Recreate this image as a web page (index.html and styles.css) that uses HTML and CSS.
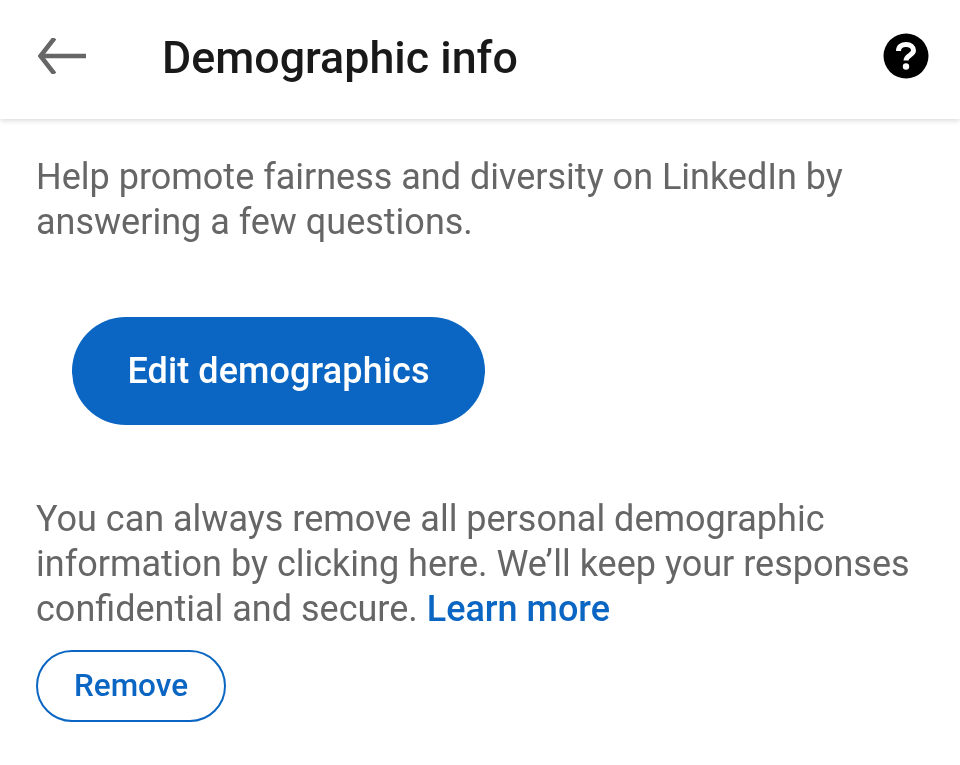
FILE: index.html
```html
<!DOCTYPE html>
<html lang="en">
<head>
  <meta charset="UTF-8">
  <title>Demographic info</title>
  <link rel="stylesheet" href="styles.css">
</head>
<body>

  <header class="topbar">
    <svg class="back-icon" width="48" height="36" viewBox="0 0 48 36" aria-hidden="true">
      <path d="M16.500 0 L2.500 18 L16.500 36 M2.500 18 H48" fill="none" stroke="#666" stroke-width="4.500"/>
    </svg>
    <h1 class="title">Demographic info</h1>
    <svg class="help-icon" width="46" height="46" viewBox="0 0 46 46" aria-hidden="true">
      <circle cx="23" cy="23" r="22.500" fill="#000"/>
      <path d="M15.500 18 C15.500 13.500 19 11.500 23 11.500 C27.500 11.500 30.500 14 30.500 17.500 C30.500 22 23 22.500 23 27.500" fill="none" stroke="#fff" stroke-width="5"/>
      <circle cx="23" cy="33.500" r="3.200" fill="#fff"/>
    </svg>
  </header>

  <main class="content">
    <p class="text">Help promote fairness and diversity on LinkedIn by answering a few questions.</p>
    <a class="button-primary" href="#">Edit demographics</a>
    <p class="text">You can always remove all personal demographic information by clicking here. We’ll keep your responses confidential and secure. <a class="link" href="#">Learn more</a></p>
    <a class="button-outline" href="#">Remove</a>
  </main>

</body>
</html>
```

FILE: styles.css
```css
html, body {
  margin: 0;
  padding: 0;
}

body {
  background-color: #fff;
  font-family: Roboto, "Liberation Sans", sans-serif;
  color: #666;
}

.topbar {
  display: flex;
  align-items: center;
  height: 119px;
  padding: 0 31px 7px 38px;
  box-sizing: border-box;
  background-color: #fff;
  box-shadow: 0 1px 6px rgba(0,0,0,0.18);
}

.back-icon {
  flex: none;
}

.title {
  flex: 1;
  margin: 3px 0 0 76px;
  font-size: 44.800px;
  font-weight: 500;
  color: #191919;
  will-change: transform;
}

.help-icon {
  flex: none;
}

.content {
  display: flex;
  flex-direction: column;
  align-items: flex-start;
  padding: 36px 36px 0;
  will-change: transform;
}

.text {
  margin: 0;
  font-size: 36px;
  line-height: 45px;
}

.link {
  color: #0a66c2;
  font-weight: 500;
  text-decoration: none;
}

.button-primary {
  display: flex;
  align-items: center;
  justify-content: center;
  width: 413px;
  height: 108px;
  margin: 72px 0 72px 36px;
  border-radius: 54px;
  background-color: #0a66c2;
  color: #fff;
  font-size: 36px;
  letter-spacing: 0.1px;
  font-weight: 500;
  text-decoration: none;
}

.button-outline {
  display: flex;
  align-items: center;
  justify-content: center;
  width: 190px;
  height: 72px;
  margin-top: 18px;
  padding-bottom: 2px;
  box-sizing: border-box;
  border: 2px solid #0a66c2;
  border-radius: 36px;
  color: #0a66c2;
  font-size: 31.500px;
  font-weight: 500;
  text-decoration: none;
}
```
